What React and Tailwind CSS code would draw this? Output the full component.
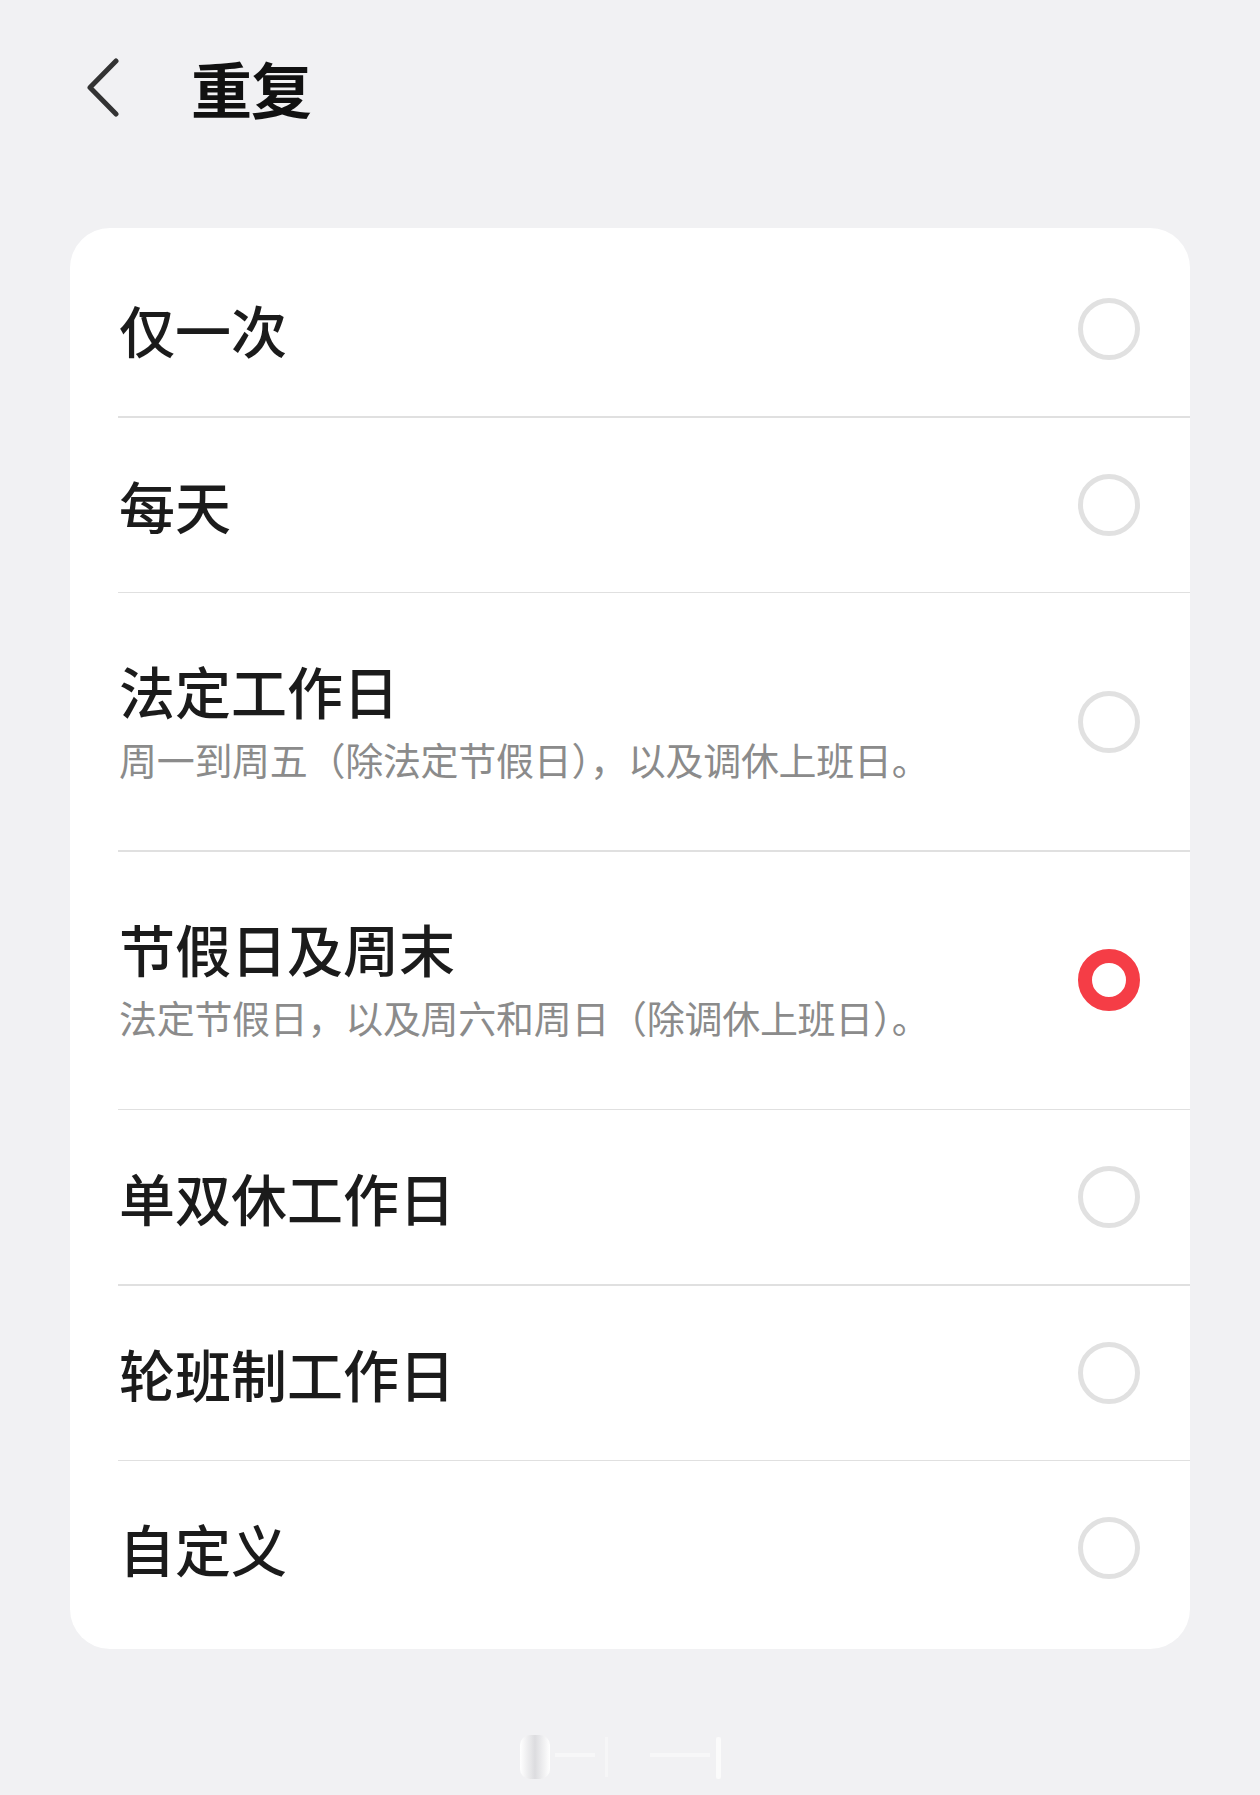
const options = [
  { title: "仅一次" },
  { title: "每天" },
  { title: "法定工作日", desc: "周一到周五（除法定节假日），以及调休上班日。" },
  { title: "节假日及周末", desc: "法定节假日，以及周六和周日（除调休上班日）。" },
  { title: "单双休工作日" },
  { title: "轮班制工作日" },
  { title: "自定义" },
];

function Radio({ checked }) {
  if (checked) {
    return <div className="w-[62px] h-[62px] rounded-full border-[14px] border-[#f53d46] bg-white shrink-0" />;
  }
  return <div className="w-[62px] h-[62px] rounded-full border-[5px] border-[#e1e1e1] bg-white shrink-0" />;
}

export default function App() {
  const selected = 3;

  return (
    <div
      className="min-h-[1795px] w-full bg-[#f1f1f3] flex flex-col"
      style={{ fontFamily: '"Noto Sans CJK SC", "Noto Sans", sans-serif' }}
    >
      <div className="h-[176px] flex items-center pl-[85px] pb-[1px]">
        <svg width="36" height="60" viewBox="0 0 36 60" className="shrink-0">
          <path d="M31 3 L5 29.5 L31 56" fill="none" stroke="#333333" strokeWidth="5" strokeLinecap="round" strokeLinejoin="round" />
        </svg>
        <h1 className="ml-[70px] text-[61px] font-bold text-[#111111] leading-none tracking-[-1px]">重复</h1>
      </div>

      <div className="mt-[52px] mx-[70px] bg-white rounded-[40px] py-[14px]">
        {options.map((opt, i) => (
          <div key={opt.title}>
            {i > 0 && <div className="ml-[48px] h-[1.5px] bg-[#e0e0e0]" />}
            <div
              className={`flex items-center justify-between pl-[49px] pr-[50px] ${opt.desc ? "h-[257px]" : "h-[174px]"}`}
            >
              <div className={`flex flex-col ${opt.desc ? "pb-[6px]" : ""}`}>
                <span className="text-[56px] leading-[72px] font-medium text-[#1b1b1b]">{opt.title}</span>
                {opt.desc && (
                  <span className="mt-[8px] text-[38px] leading-[50px] text-[#8b8b8b] tracking-[-0.3px]">{opt.desc}</span>
                )}
              </div>
              <Radio checked={i === selected} />
            </div>
          </div>
        ))}
      </div>

      <div className="flex justify-center mt-[84px]">
        <svg width="240" height="50" viewBox="0 0 240 50">
          <defs>
            <linearGradient id="wm" x1="0" x2="1" y1="0" y2="0">
              <stop offset="0" stopColor="#ffffff" />
              <stop offset="0.5" stopColor="#dcdcdf" />
              <stop offset="1" stopColor="#ffffff" />
            </linearGradient>
          </defs>
          <rect x="10" y="2" width="30" height="44" rx="10" fill="url(#wm)" />
          <rect x="45" y="20" width="40" height="4" fill="#f7f7f8" />
          <rect x="95" y="4" width="3" height="40" fill="#f6f6f7" />
          <rect x="140" y="20" width="60" height="4" fill="#f7f7f8" />
          <rect x="206" y="4" width="5" height="42" rx="2" fill="#fbfbfb" />
        </svg>
      </div>
    </div>
  );
}
